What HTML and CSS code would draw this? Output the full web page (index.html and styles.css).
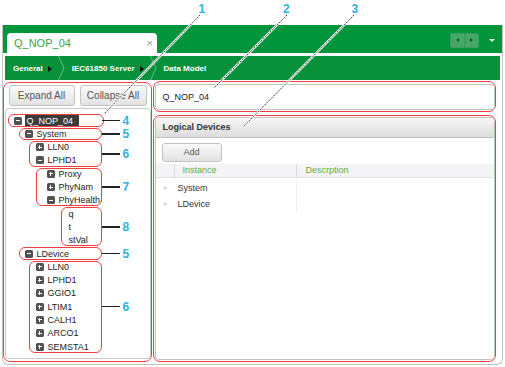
FILE: index.html
```html
<!DOCTYPE html>
<html lang="en">
<head>
  <meta charset="UTF-8">
  <title>Data Model</title>
  <link rel="stylesheet" href="styles.css">
</head>
<body>
  <div class="top-strip"></div>

  <div class="frame">
    <!-- tab bar -->
    <div class="tabbar">
      <div class="tab">
        <span class="tab-title">Q_NOP_04</span>
        <span class="tab-close">&times;</span>
      </div>
      <div class="tab-tools">
        <div class="pager">
          <span class="pg"><i class="pg-arrow pg-left"></i></span>
          <span class="pg"><i class="pg-arrow pg-right"></i></span>
        </div>
        <i class="menu-caret"></i>
      </div>
    </div>
    <div class="tab-gap"></div>

    <!-- breadcrumb -->
    <div class="crumbs">
      <span class="crumb">General</span>
      <i class="crumb-arrow"></i>
      <svg class="crumb-sep" width="7" height="24" viewBox="0 0 7 24"><polyline points="0.5,0 6,12 0.5,24" fill="none" stroke="rgba(255,255,255,0.4)" stroke-width="1"/></svg>
      <span class="crumb">IEC61850 Server</span>
      <i class="crumb-arrow"></i>
      <svg class="crumb-sep" width="7" height="24" viewBox="0 0 7 24"><polyline points="0.5,0 6,12 0.5,24" fill="none" stroke="rgba(255,255,255,0.4)" stroke-width="1"/></svg>
      <span class="crumb">Data Model</span>
    </div>

    <div class="main">
      <!-- left: tree -->
      <div class="left-col">
        <div class="btn-row">
          <div class="btn btn-expand">Expand All</div>
          <div class="btn btn-collapse">Collapse All</div>
        </div>
        <div class="tree">
          <div class="mark mk-root">
            <div class="row lv0"><i class="tg minus"></i><span class="sel">Q_NOP_04</span></div>
            <span class="callout">4</span>
          </div>
          <div class="mark mk-ld">
            <div class="row lv1"><i class="tg minus"></i>System</div>
            <span class="callout">5</span>
          </div>
          <div class="mark mk-ln">
            <div class="row lv2"><i class="tg plus"></i>LLN0</div>
            <div class="row lv2"><i class="tg minus"></i>LPHD1</div>
            <span class="callout">6</span>
          </div>
          <div class="mark mk-do">
            <div class="row lv3"><i class="tg plus"></i>Proxy</div>
            <div class="row lv3"><i class="tg plus"></i>PhyNam</div>
            <div class="row lv3"><i class="tg minus"></i>PhyHealth</div>
            <span class="callout">7</span>
          </div>
          <div class="mark mk-da">
            <div class="row lv4">q</div>
            <div class="row lv4">t</div>
            <div class="row lv4">stVal</div>
            <span class="callout">8</span>
          </div>
          <div class="mark mk-ld">
            <div class="row lv1"><i class="tg minus"></i>LDevice</div>
            <span class="callout">5</span>
          </div>
          <div class="mark mk-ln">
            <div class="row lv2"><i class="tg plus"></i>LLN0</div>
            <div class="row lv2"><i class="tg plus"></i>LPHD1</div>
            <div class="row lv2"><i class="tg plus"></i>GGIO1</div>
            <div class="row lv2"><i class="tg plus"></i>LTIM1</div>
            <div class="row lv2"><i class="tg plus"></i>CALH1</div>
            <div class="row lv2"><i class="tg plus"></i>ARCO1</div>
            <div class="row lv2"><i class="tg plus"></i>SEMSTA1</div>
            <span class="callout">6</span>
          </div>
        </div>
      </div>

      <!-- right: details -->
      <div class="right-col">
        <div class="name-wrap">
          <div class="name-box">Q_NOP_04</div>
        </div>
        <div class="ld-wrap">
          <div class="ld-panel">
            <div class="ld-head">Logical Devices</div>
            <div class="btn btn-add">Add</div>
            <div class="grid">
              <div class="th th-exp"></div>
              <div class="th th-inst">Instance</div>
              <div class="th">Descrption</div>

              <div class="td td-exp"><i class="exp"></i></div>
              <div class="td td-inst">System</div>
              <div class="td"></div>

              <div class="td td-exp"><i class="exp"></i></div>
              <div class="td td-inst">LDevice</div>
              <div class="td"></div>
            </div>
          </div>
        </div>
      </div>
    </div>
  </div>

  <!-- callouts from the top -->
  <svg class="leaders" width="505" height="367" viewBox="0 0 505 367">
    <g stroke="#fff" stroke-width="2.4">
      <line x1="200" y1="15" x2="104" y2="114"/>
      <line x1="287" y1="15" x2="214" y2="88"/>
      <line x1="354" y1="15" x2="243" y2="127"/>
    </g>
    <g stroke="#222" stroke-width="0.9" stroke-dasharray="1.6 0.9">
      <line x1="200" y1="15" x2="104" y2="114"/>
      <line x1="287" y1="15" x2="214" y2="88"/>
      <line x1="354" y1="15" x2="243" y2="127"/>
    </g>
    <g class="lead-num">
      <text x="198.5" y="12.5">1</text>
      <text x="283" y="12.5">2</text>
      <text x="351.5" y="12.5">3</text>
    </g>
  </svg>
</body>
</html>
```

FILE: styles.css
```css
* {
  box-sizing: border-box;
  margin: 0;
  padding: 0;
}
body {
  font-family: "Liberation Sans", Arial, sans-serif;
  background: #fff;
  width: 505px;
  height: 367px;
  overflow: hidden;
  position: relative;
}
.top-strip {
  height: 25px;
}

.frame {
  margin: 0 2px;
  height: 340px;
  border: 1px solid #c3c3c3;
  border-top: none;
  border-radius: 0 0 6px 6px;
  display: flex;
  flex-direction: column;
}

/* tab bar */
.tabbar {
  height: 28px;
  background: #00953a;
  display: flex;
  align-items: flex-end;
  padding-left: 4px;
}
.tab {
  width: 150px;
  height: 20px;
  background: #fff;
  border-radius: 4px 4px 0 0;
  display: flex;
  align-items: center;
  padding: 0 4px 0 7px;
}
.tab-title {
  font-size: 11px;
  color: #3aa346;
}
.tab-close {
  margin-left: auto;
  font-size: 11px;
  color: #9a9a9a;
}
.tab-tools {
  margin-left: auto;
  align-self: center;
  display: flex;
  align-items: center;
  padding-right: 7px;
  margin-top: 2px;
}
.pager {
  display: flex;
  margin-right: 10px;
}
.pg {
  width: 14.5px;
  height: 15px;
  background: #45a866;
  border: 1px solid #3d9d5d;
  display: flex;
  align-items: center;
  justify-content: center;
}
.pg:first-child {
  border-radius: 2px 0 0 2px;
}
.pg:last-child {
  border-radius: 0 2px 2px 0;
}
.pg-arrow {
  width: 0;
  height: 0;
  border-top: 2.5px solid transparent;
  border-bottom: 2.5px solid transparent;
}
.pg-left {
  border-right: 3px solid #1d4d2d;
}
.pg-right {
  border-left: 3px solid #1d4d2d;
}
.menu-caret {
  width: 0;
  height: 0;
  border-left: 3px solid transparent;
  border-right: 3px solid transparent;
  border-top: 3.5px solid #fff;
}
.tab-gap {
  height: 3px;
}

/* breadcrumb */
.crumbs {
  margin: 0 2px;
  height: 24px;
  background: #07913a;
  display: flex;
  align-items: center;
  padding-left: 8px;
}
.crumb {
  font-size: 8px;
  font-weight: bold;
  color: #fff;
}
.crumb-arrow {
  width: 0;
  height: 0;
  border-top: 3px solid transparent;
  border-bottom: 3px solid transparent;
  border-left: 4px solid #111;
  margin: 1px 6px 0 5px;
}
.crumb-sep {
  margin-right: 7px;
}

/* main area */
.main {
  flex: 1;
  display: flex;
  gap: 1px;
}

.left-col {
  width: 149px;
  height: 280px;
  margin-top: 2px;
  border: 1.5px solid #ef3e42;
  border-radius: 7px;
  display: flex;
  flex-direction: column;
}
.btn-row {
  display: flex;
  gap: 5px;
  margin: 1.5px 0 0 4.5px;
}
.btn {
  height: 21px;
  border: 1px solid #c4c4c4;
  border-radius: 3px;
  background: linear-gradient(#fbfbfb, #e2e2e2);
  color: #555;
  font-size: 10px;
  display: flex;
  align-items: center;
  justify-content: center;
}
.btn-expand {
  width: 66px;
}
.btn-collapse {
  width: 67px;
}

.tree {
  flex: 1;
  margin: 2px 0.5px 2.5px 0.5px;
  border: 1px solid #c8c8c8;
  border-radius: 4px;
  padding-top: 5.4px;
}
.row {
  height: 13.3px;
  display: flex;
  align-items: center;
  font-size: 9px;
  color: #222;
}
.lv0 { padding-left: 8px; }
.lv1 { padding-left: 19px; }
.lv2 { padding-left: 30px; }
.lv3 { padding-left: 41px; }
.lv4 { padding-left: 63px; }

.tg {
  width: 8px;
  height: 8px;
  background: #525252;
  border-radius: 1.5px;
  margin-right: 4px;
  position: relative;
  flex-shrink: 0;
}
.tg::before {
  content: "";
  position: absolute;
  left: 2px;
  top: 3.5px;
  width: 4px;
  height: 1px;
  background: #fff;
}
.plus::after {
  content: "";
  position: absolute;
  left: 3.5px;
  top: 2px;
  width: 1px;
  height: 4px;
  background: #fff;
}
.sel {
  background: #3c3c3c;
  color: #fff;
  padding: 1px 6px 1px 2px;
  margin-left: -1px;
}

/* red annotation boxes + callouts */
.mark {
  position: relative;
}
.mark::before {
  content: "";
  position: absolute;
  top: 0.5px;
  bottom: 0.5px;
  border: 1.5px solid #ef3e42;
  border-radius: 6px;
}
.mk-root::before { left: 2px; width: 94px; }
.mk-ld::before { left: 13.5px; width: 80.5px; }
.mk-ln::before { left: 23px; width: 71px; }
.mk-do::before { left: 30px; width: 64px; }
.mk-da::before { left: 55px; width: 39px; }

.callout {
  position: absolute;
  left: 96px;
  top: 50%;
  transform: translateY(-50%);
  display: flex;
  align-items: center;
  font-size: 12px;
  font-weight: bold;
  color: #2bb3e6;
}
.callout::before {
  content: "";
  width: 18px;
  height: 1.5px;
  background: #222;
  margin-right: 3px;
}

/* right column */
.right-col {
  width: 343px;
  display: flex;
  flex-direction: column;
}
.name-wrap {
  height: 31px;
  margin-top: 1px;
  border: 1.5px solid #ef3e42;
  border-radius: 7px;
  padding: 0 0.5px;
}
.name-box {
  height: 26px;
  margin-top: 1.5px;
  border: 1px solid #c3c3c3;
  border-radius: 3px;
  font-size: 9px;
  color: #222;
  display: flex;
  align-items: center;
  padding-left: 7px;
}
.ld-wrap {
  height: 247px;
  margin-top: 3px;
  border: 1.5px solid #ef3e42;
  border-radius: 7px;
  padding: 0.5px 0.5px 1.5px;
}
.ld-panel {
  height: 100%;
  border: 1px solid #c3c3c3;
  border-radius: 4px;
  overflow: hidden;
}
.ld-head {
  height: 20px;
  background: linear-gradient(#f7f7f7, #dcdcdc);
  border-bottom: 1px solid #c4c4c4;
  font-size: 9px;
  font-weight: bold;
  color: #333;
  display: flex;
  align-items: center;
  padding-left: 7px;
}
.btn-add {
  width: 60px;
  height: 19px;
  margin: 5px 0 0 6px;
  font-size: 9px;
}

.grid {
  display: grid;
  grid-template-columns: 19px 122px 1fr;
  margin-top: 2px;
}
.th {
  height: 14px;
  background: #f4f4f6;
  border-bottom: 1px solid #e2e2e2;
  font-size: 9px;
  color: #5fae3c;
  display: flex;
  align-items: center;
  padding-left: 9px;
}
.th-exp,
.th-inst {
  border-right: 1px solid #dcdcdc;
}
.th-exp {
  padding: 0;
}
.th-inst {
  padding-left: 8px;
}
.td {
  height: 16px;
  font-size: 9px;
  color: #333;
  display: flex;
  align-items: center;
}
.grid .td:nth-child(-n+6) {
  margin-top: 2px;
}
.td-inst {
  border-right: 1px solid #efefef;
  padding-left: 3px;
}
.td-exp {
  justify-content: center;
}
.exp {
  width: 0;
  height: 0;
  border-top: 2.5px solid transparent;
  border-bottom: 2.5px solid transparent;
  border-left: 3px solid #d0d0d0;
  margin-left: 1px;
}

/* top leader lines */
.leaders {
  position: absolute;
  left: 0;
  top: 0;
  pointer-events: none;
}
.lead-num {
  font-family: "Liberation Sans", Arial, sans-serif;
  font-size: 12px;
  font-weight: bold;
  fill: #2bb3e6;
}
```
